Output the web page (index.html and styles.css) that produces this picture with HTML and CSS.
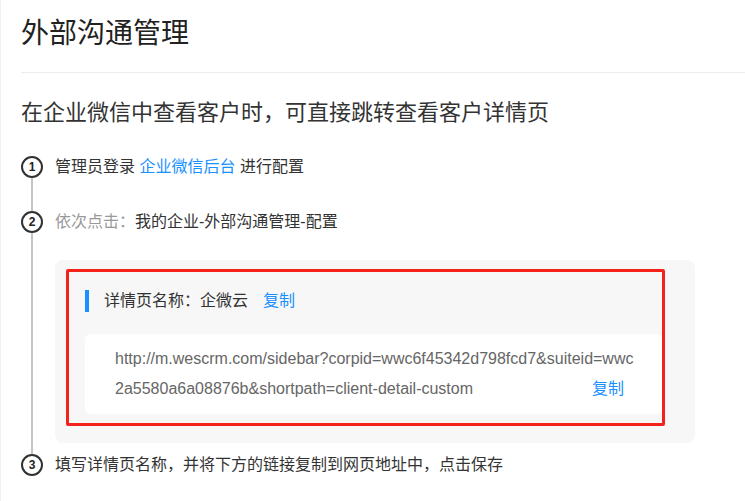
FILE: index.html
```html
<!DOCTYPE html>
<html lang="zh-CN">
<head>
    <meta charset="UTF-8">
    <meta name="viewport" content="width=device-width, initial-scale=1.0">
    <title>外部沟通管理</title>
    <link rel="stylesheet" href="styles.css">
</head>
<body>
    <div class="page">
        <h1 class="page-title">外部沟通管理</h1>
        <h2 class="sub-title">在企业微信中查看客户时，可直接跳转查看客户详情页</h2>

        <div class="steps">
            <div class="step">
                <div class="step-side">
                    <span class="step-num">1</span>
                    <span class="step-line"></span>
                </div>
                <div class="step-body step-body-1">
                    <p class="step-text">管理员登录 <a class="link" href="#">企业微信后台</a> 进行配置</p>
                </div>
            </div>

            <div class="step">
                <div class="step-side">
                    <span class="step-num">2</span>
                    <span class="step-line"></span>
                </div>
                <div class="step-body step-body-2">
                    <p class="step-text"><span class="muted">依次点击：</span>我的企业-外部沟通管理-配置</p>

                    <div class="panel">
                        <div class="panel-head">
                            详情页名称：企微云<a class="link copy" href="#">复制</a>
                        </div>
                        <div class="url-box">
                            <span class="url">http://m.wescrm.com/sidebar?corpid=wwc6f45342d798fcd7&amp;suiteid=wwc2a5580a6a08876b&amp;shortpath=client-detail-custom</span><a class="link url-copy" href="#">复制</a>
                        </div>
                        <!-- 截图标注框 -->
                        <div class="mark"></div>
                    </div>
                </div>
            </div>

            <div class="step">
                <div class="step-side">
                    <span class="step-num">3</span>
                </div>
                <div class="step-body">
                    <p class="step-text">填写详情页名称，并将下方的链接复制到网页地址中，点击保存</p>
                </div>
            </div>
        </div>
    </div>
</body>
</html>
```

FILE: styles.css
```css
body {
    margin: 0;
    padding: 0;
    background-color: #fff;
    color: #333;
    font-family: "Liberation Sans", "Noto Sans CJK SC", sans-serif;
}

.page {
    min-height: 501px;
    padding: 14px 0 0 20px;
    border-left: 1px solid #f2f2f2;
    box-sizing: border-box;
}

.page-title {
    margin: 0;
    padding-bottom: 18px;
    font-size: 28px;
    line-height: 40px;
    font-weight: normal;
    color: #222;
    border-bottom: 1px solid #ececec;
}

.sub-title {
    margin: 25px 0 28px;
    font-size: 22px;
    line-height: 30px;
    font-weight: normal;
    color: #333;
}

.link {
    color: #1890ff;
    text-decoration: none;
}

.muted {
    color: #999;
}

.step {
    display: flex;
    gap: 12px;
}

.step-side {
    display: flex;
    flex-direction: column;
    align-items: center;
    width: 22px;
    flex-shrink: 0;
}

.step-num {
    width: 22px;
    height: 22px;
    box-sizing: border-box;
    border: 2px solid #303133;
    border-radius: 50%;
    font-size: 12px;
    font-weight: bold;
    line-height: 18px;
    text-align: center;
    color: #222;
}

.step-line {
    flex: 1;
    width: 2px;
    background-color: #c0c4cc;
}

.step-body {
    flex: 1;
}

.step-body-1 {
    padding-bottom: 33px;
}

.step-body-2 {
    padding-bottom: 11px;
}

.step-text {
    margin: 0;
    font-size: 16px;
    line-height: 22px;
    color: #333;
}

.panel {
    position: relative;
    width: 640px;
    box-sizing: border-box;
    margin-top: 27px;
    padding: 30px 33px 29px 30px;
    background-color: #f7f7f7;
    border-radius: 8px;
}

.panel-head {
    padding-left: 15px;
    border-left: 4px solid #1890ff;
    font-size: 16px;
    line-height: 22px;
    color: #333;
}

.copy {
    margin-left: 15px;
}

.url-box {
    margin-top: 22px;
    padding: 10px 25px 10px 30px;
    background-color: #fff;
    border-radius: 6px;
    font-size: 16px;
    line-height: 30px;
    color: #666;
    word-break: break-all;
}

.url-copy {
    float: right;
    margin-right: 13px;
}

.mark {
    position: absolute;
    left: 11px;
    top: 9px;
    width: 599px;
    height: 157px;
    box-sizing: border-box;
    border: 3px solid #f5221b;
    border-radius: 2px;
}
```
